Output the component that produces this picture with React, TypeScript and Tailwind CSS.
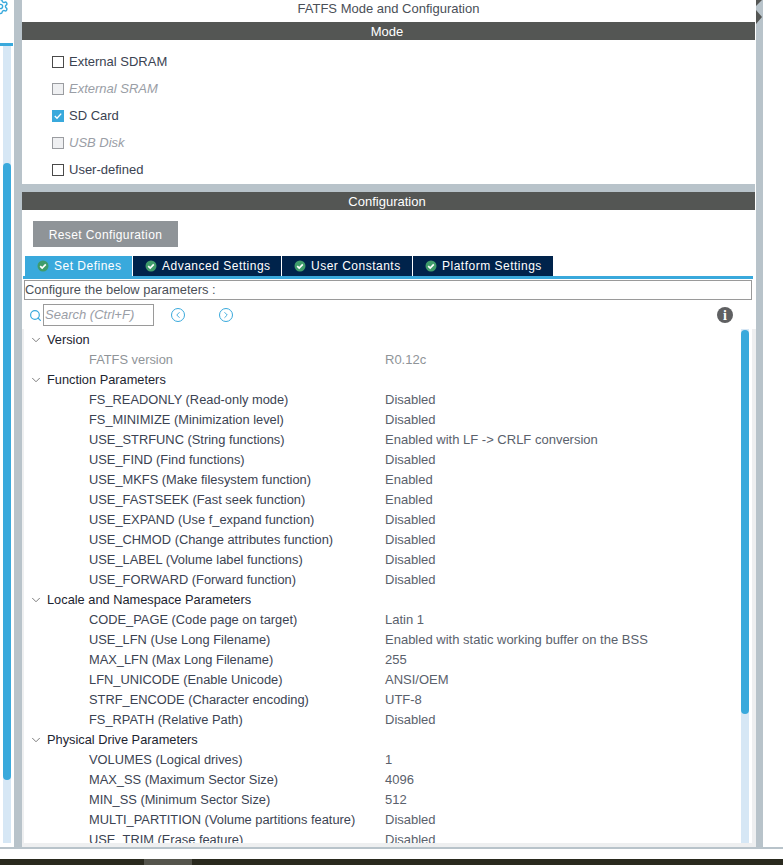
import { ChevronDown, ChevronLeft, ChevronRight, Search, Settings } from 'lucide-react';

type Row = { name: string; value?: string; muted?: boolean };
type Group = { title: string; rows: Row[] };

const GROUPS: Group[] = [
  { title: 'Version', rows: [{ name: 'FATFS version', value: 'R0.12c', muted: true }] },
  {
    title: 'Function Parameters',
    rows: [
      { name: 'FS_READONLY (Read-only mode)', value: 'Disabled' },
      { name: 'FS_MINIMIZE (Minimization level)', value: 'Disabled' },
      { name: 'USE_STRFUNC (String functions)', value: 'Enabled with LF -> CRLF conversion' },
      { name: 'USE_FIND (Find functions)', value: 'Disabled' },
      { name: 'USE_MKFS (Make filesystem function)', value: 'Enabled' },
      { name: 'USE_FASTSEEK (Fast seek function)', value: 'Enabled' },
      { name: 'USE_EXPAND (Use f_expand function)', value: 'Disabled' },
      { name: 'USE_CHMOD (Change attributes function)', value: 'Disabled' },
      { name: 'USE_LABEL (Volume label functions)', value: 'Disabled' },
      { name: 'USE_FORWARD (Forward function)', value: 'Disabled' },
    ],
  },
  {
    title: 'Locale and Namespace Parameters',
    rows: [
      { name: 'CODE_PAGE (Code page on target)', value: 'Latin 1' },
      { name: 'USE_LFN (Use Long Filename)', value: 'Enabled with static working buffer on the BSS' },
      { name: 'MAX_LFN (Max Long Filename)', value: '255' },
      { name: 'LFN_UNICODE (Enable Unicode)', value: 'ANSI/OEM' },
      { name: 'STRF_ENCODE (Character encoding)', value: 'UTF-8' },
      { name: 'FS_RPATH (Relative Path)', value: 'Disabled' },
    ],
  },
  {
    title: 'Physical Drive Parameters',
    rows: [
      { name: 'VOLUMES (Logical drives)', value: '1' },
      { name: 'MAX_SS (Maximum Sector Size)', value: '4096' },
      { name: 'MIN_SS (Minimum Sector Size)', value: '512' },
      { name: 'MULTI_PARTITION (Volume partitions feature)', value: 'Disabled' },
      { name: 'USE_TRIM (Erase feature)', value: 'Disabled' },
    ],
  },
];

const MODES = [
  { label: 'External SDRAM', state: 'off' },
  { label: 'External SRAM', state: 'disabled' },
  { label: 'SD Card', state: 'on' },
  { label: 'USB Disk', state: 'disabled' },
  { label: 'User-defined', state: 'off' },
];

const TABS = [
  { label: 'Set Defines', width: 'w-[107px]', bg: 'bg-[#39a9dc]' },
  { label: 'Advanced Settings', width: 'w-[148px]', bg: 'bg-[#00234b]' },
  { label: 'User Constants', width: 'w-[130px]', bg: 'bg-[#00234b]' },
  { label: 'Platform Settings', width: 'w-[140px]', bg: 'bg-[#00234b]' },
];

function Check() {
  return (
    <svg width="12" height="12" viewBox="0 0 12 12" className="shrink-0">
      <circle cx="6" cy="6" r="5.5" fill="#3f9c6b" />
      <path d="M3.2 6.1 5.2 8 8.8 4.4" fill="none" stroke="#ffffff" strokeWidth="1.7" />
    </svg>
  );
}

function Box({ state }: { state: string }) {
  if (state === 'on') {
    return (
      <span className="flex h-3 w-3 items-center justify-center bg-[#39a9dc]">
        <svg width="10" height="10" viewBox="0 0 10 10">
          <path d="M1.8 5 4 7.2 8.2 2.6" fill="none" stroke="#ffffff" strokeWidth="1.4" />
        </svg>
      </span>
    );
  }
  if (state === 'disabled') return <span className="h-3 w-3 border border-[#9a9ca0] bg-[#eff0f2]" />;
  return <span className="h-3 w-3 border border-[#4a4a4a] bg-white" />;
}

function Header({ children }: { children: string }) {
  return (
    <div className="mr-px flex h-[18px] shrink-0 items-center justify-center bg-[#545654] pr-[3px] pt-px text-[13px] text-white">
      {children}
    </div>
  );
}

export default function App() {
  return (
    <div className="flex h-[865px] w-[783px] flex-col overflow-hidden bg-white font-['Liberation_Sans',Arial,sans-serif] text-[13px] text-[#3b4352]">
      <div className="flex h-[849px] shrink-0 border-b-2 border-[#b8c3ca]">
        {/* Left rail */}
        <div className="relative w-[14px] shrink-0 overflow-hidden">
          <Settings size={17} strokeWidth={2} className="absolute -left-2 -top-[2px] text-[#39a9dc]" />
          <div className="mt-[43px] h-[3px] w-[13px] bg-[#39a9dc]" />
          <div className="ml-[3px] h-[797px] w-2 bg-[#d6e7f5] pt-[117px]">
            <div className="h-[617px] w-2 rounded-full bg-[#39a9dc]" />
          </div>
        </div>
        <div className="w-2 shrink-0 bg-[#b8c3ca]" />

        {/* Main panel */}
        <div className="flex w-[734px] shrink-0 flex-col">
          <div className="flex h-[22px] shrink-0 items-center justify-center pb-1 pr-px text-[#4a4f57]">
            FATFS Mode and Configuration
          </div>
          <Header>Mode</Header>
          <div className="h-[144px] shrink-0 pl-[30px] pt-2">
            {MODES.map(m => (
              <div key={m.label} className="flex h-[27px] items-center gap-[5px]">
                <Box state={m.state} />
                <span className={m.state === 'disabled' ? 'italic text-[#9a9ea6]' : ''}>{m.label}</span>
              </div>
            ))}
          </div>
          <div className="mr-px h-2 shrink-0 bg-[#b8c3ca]" />
          <Header>Configuration</Header>

          <div className="flex min-h-0 flex-1 flex-col">
            <div className="ml-[11px] mt-[11px] flex h-[26px] w-[145px] shrink-0 items-center justify-center bg-[#8f9498] pt-px text-xs tracking-[0.4px] text-white">
              Reset Configuration
            </div>
            <div className="ml-[3px] mt-[9px] flex h-5 shrink-0 gap-px">
              {TABS.map(t => (
                <div key={t.label} className={`flex items-center gap-[5px] pl-3 text-xs tracking-[0.5px] text-white ${t.width} ${t.bg}`}>
                  <Check />
                  {t.label}
                </div>
              ))}
            </div>
            <div className="ml-px mr-[3px] h-[3px] shrink-0 bg-[#39a9dc]" />
            <div className="ml-[2px] mr-[4px] mt-px flex h-5 shrink-0 items-center border border-[#9a9a9a] text-[12.9px] text-[#4a4f57]">
              Configure the below parameters :
            </div>

            <div className="ml-[7px] mr-[23px] mt-[4px] flex h-[22px] shrink-0 items-center">
              <Search size={13} strokeWidth={2.2} className="text-[#39a9dc]" />
              <div className="ml-px flex h-[22px] w-[111px] items-center border border-[#9a9a9a] pl-px italic text-[#9a9ea6]">
                Search (Ctrl+F)
              </div>
              <span className="ml-[17px] flex h-[14px] w-[14px] items-center justify-center rounded-full border border-[#39a9dc] text-[#39a9dc]">
                <ChevronLeft size={10} strokeWidth={2.2} />
              </span>
              <span className="ml-[34px] flex h-[14px] w-[14px] items-center justify-center rounded-full border border-[#39a9dc] text-[#39a9dc]">
                <ChevronRight size={10} strokeWidth={2.2} />
              </span>
              <span className="ml-auto flex h-4 w-4 items-center justify-center rounded-full bg-[#5f6062] font-['Liberation_Serif',serif] text-[14px] font-bold text-white">
                i
              </span>
            </div>

            <div className="mt-[3px] flex min-h-0 flex-1 border-b-4 border-l-2 border-r-4 border-[#eeeff0]">
              <div className="min-w-0 flex-1 overflow-hidden">
                {GROUPS.map(g => (
                  <div key={g.title}>
                    <div className="flex h-5 items-center pt-px text-[#1c2430]">
                      <ChevronDown size={14} strokeWidth={1.5} className="ml-[5px] text-[#6a6a6a]" />
                      <span className="ml-[4px] text-[12.8px]">{g.title}</span>
                    </div>
                    {g.rows.map(r => (
                      <div key={r.name} className={`flex h-5 items-center pt-px ${r.muted ? 'text-[#8f9498]' : ''}`}>
                        <span className="ml-[65px] w-[296px] shrink-0 text-[12.85px]">{r.name}</span>
                        <span className={r.muted ? '' : 'text-[#5a616c]'}>{r.value}</span>
                      </div>
                    ))}
                  </div>
                ))}
              </div>
              <div className="mr-[3px] h-full w-2 shrink-0 bg-[#d6e7f5] pt-px">
                <div className="h-[384px] w-2 rounded-full bg-[#39a9dc]" />
              </div>
            </div>
          </div>
        </div>

        {/* Right splitter */}
        <div className="relative w-[7px] shrink-0 bg-[#b8c3ca]">
          <span className="absolute left-0 top-[10px] h-0 w-0 border-y-[7px] border-l-[6px] border-y-transparent border-l-[#545654]" />
          <span className="absolute -top-[6px] left-0 h-0 w-0 border-y-[6px] border-l-[6px] border-y-transparent border-l-[#545654]" />
        </div>
      </div>

      <div className="h-[10px] shrink-0" />
      <div className="flex h-[6px] shrink-0 bg-[#2a2a1e]">
        <div className="ml-[144px] w-12 bg-[#55554c]" />
      </div>
    </div>
  );
}
